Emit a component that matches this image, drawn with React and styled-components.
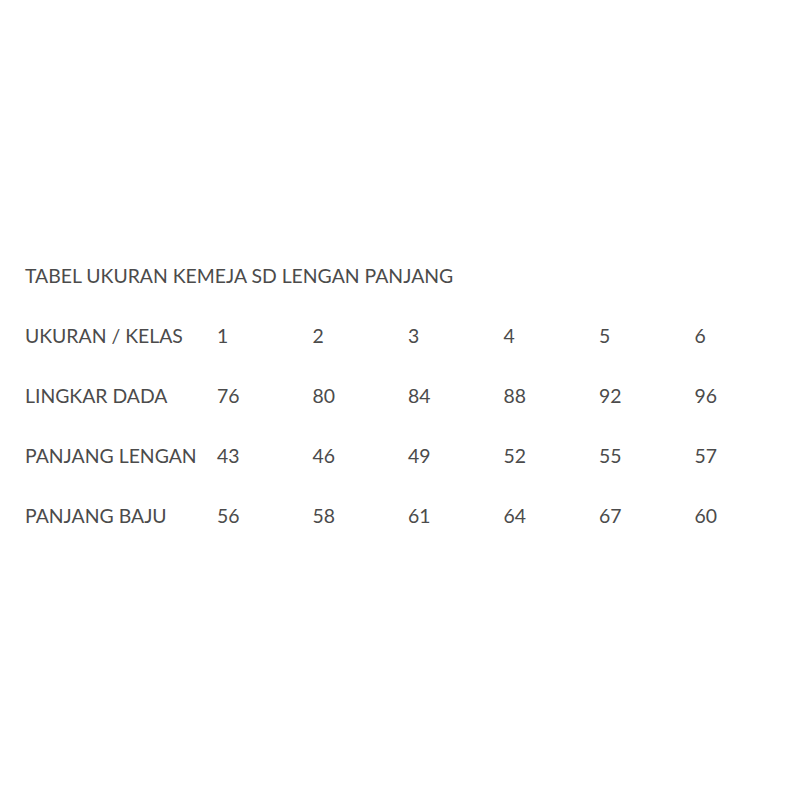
import React from "react";
import styled, { createGlobalStyle } from "styled-components";

const Global = createGlobalStyle`
  html, body { margin: 0; padding: 0; background: #ffffff; }
  body { font-family: Lato, "Open Sans", sans-serif; }
`;

const Page = styled.div`
  width: 788px;
  height: 788px;
  box-sizing: border-box;
  padding: 264px 0 0 25px;
  background: #ffffff;
  color: #4b4b4b;
`;

const Title = styled.div`
  height: 60px;
  font-size: 19.4px;
  line-height: 24px;
`;

const Table = styled.div`
  display: grid;
  grid-template-columns: 192px repeat(6, 95.5px);
  grid-auto-rows: 60px;
`;

const Cell = styled.div`
  font-size: 19.4px;
  line-height: 24px;
  white-space: nowrap;
`;

const rows = [
  ["UKURAN / KELAS", "1", "2", "3", "4", "5", "6"],
  ["LINGKAR DADA", "76", "80", "84", "88", "92", "96"],
  ["PANJANG LENGAN", "43", "46", "49", "52", "55", "57"],
  ["PANJANG BAJU", "56", "58", "61", "64", "67", "60"],
];

export default function App() {
  return (
    <Page>
      <Global />
      <Title>TABEL UKURAN KEMEJA SD LENGAN PANJANG</Title>
      <Table>
        {rows.map((r, i) =>
          r.map((c, j) => <Cell key={`${i}-${j}`}>{c}</Cell>)
        )}
      </Table>
    </Page>
  );
}
